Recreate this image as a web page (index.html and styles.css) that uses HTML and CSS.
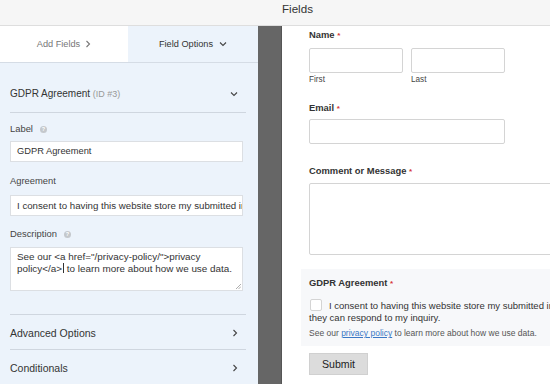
FILE: index.html
```html
<!DOCTYPE html>
<html>
<head>
<meta charset="utf-8">
<link rel="stylesheet" href="styles.css">
</head>
<body>
<div class="topbar">Fields</div>
<div class="main">
  <aside class="left">
    <div class="tabs">
      <div class="tab tab-add">Add Fields <svg class="chev" width="6" height="8" viewBox="0 0 6 8"><polyline points="1.5,1 4.5,4 1.5,7" fill="none" stroke="#777" stroke-width="1.1"/></svg></div>
      <div class="tab tab-opt">Field Options <svg class="chev" width="8" height="6" viewBox="0 0 8 6"><polyline points="1,1.5 4,4.5 7,1.5" fill="none" stroke="#444" stroke-width="1.1"/></svg></div>
    </div>
    <div class="opts">
      <div class="opt-head">
        <span class="opt-title">GDPR Agreement <span class="opt-id">(ID #3)</span></span>
        <svg width="8" height="6" viewBox="0 0 8 6"><polyline points="1,1.5 4,4.5 7,1.5" fill="none" stroke="#444" stroke-width="1.1"/></svg>
      </div>
      <div class="lbl lbl-first">Label <span class="help">?</span></div>
      <div class="inp">GDPR Agreement</div>
      <div class="lbl lbl-agree">Agreement</div>
      <div class="inp inp-agree">I consent to having this website store my submitted information so they can respond to my inquiry.</div>
      <div class="lbl lbl-desc">Description <span class="help">?</span></div>
      <div class="txa">See our &lt;a href="/privacy-policy/"&gt;privacy policy&lt;/a&gt;<span class="caret"></span> to learn more about how we use data.
        <svg class="grip" width="6" height="6" viewBox="0 0 6 6"><line x1="1" y1="6" x2="6" y2="1" stroke="#999" stroke-width="0.8"/><line x1="3.5" y1="6" x2="6" y2="3.5" stroke="#999" stroke-width="0.8"/></svg>
      </div>
      <div class="sect sect-first">Advanced Options <svg width="6" height="8" viewBox="0 0 6 8"><polyline points="1.5,1 4.5,4 1.5,7" fill="none" stroke="#444" stroke-width="1.1"/></svg></div>
      <div class="sect">Conditionals <svg width="6" height="8" viewBox="0 0 6 8"><polyline points="1.5,1 4.5,4 1.5,7" fill="none" stroke="#444" stroke-width="1.1"/></svg></div>
    </div>
  </aside>
  <div class="gutter"></div>
  <section class="right">
    <div class="form">
      <div class="field">
        <div class="flabel">Name <span class="req">*</span></div>
        <div class="name-row">
          <div class="name-col"><div class="box box-name"></div><div class="sub">First</div></div>
          <div class="name-col"><div class="box box-name"></div><div class="sub">Last</div></div>
        </div>
      </div>
      <div class="field field-email">
        <div class="flabel">Email <span class="req">*</span></div>
        <div class="box box-email"></div>
      </div>
      <div class="field field-comment">
        <div class="flabel">Comment or Message <span class="req">*</span></div>
        <div class="box box-area"></div>
      </div>
      <div class="field gdpr">
        <div class="flabel">GDPR Agreement <span class="req">*</span></div>
        <div class="consent"><span class="check"></span>I consent to having this website store my submitted information so<br>they can respond to my inquiry.</div>
        <div class="note">See our <a href="#" class="plink">privacy policy</a> to learn more about how we use data.</div>
      </div>
      <div class="field">
        <button class="submit">Submit</button>
      </div>
    </div>
  </section>
</div>
</body>
</html>
```
FILE: styles.css
```css
* { box-sizing: border-box; }
html, body { margin: 0; padding: 0; }
body {
  width: 550px;
  height: 384px;
  overflow: hidden;
  font-family: "Liberation Sans", Arial, sans-serif;
  color: #444;
  background: #fff;
}
.topbar {
  height: 26px;
  background: #f6f6f6;
  border-bottom: 1px solid #dedede;
  padding-left: 282px;
  font-size: 11.6px;
  line-height: 18px;
  color: #333;
}
.main {
  display: flex;
  height: 358px;
}
.left {
  width: 258px;
  background: #ecf3fb;
  flex: none;
}
.tabs {
  display: flex;
  height: 37px;
  border-bottom: 1px solid #d5dce5;
}
.tab {
  display: flex;
  align-items: center;
  justify-content: center;
  gap: 5px;
  font-size: 9.2px;
}
.tab-add {
  width: 128px;
  background: #fff;
  color: #777;
}
.tab-opt {
  flex: 1;
  color: #333;
  gap: 6px;
}
.opts {
  padding: 0 12px 0 10px;
}
.opt-head {
  display: flex;
  justify-content: space-between;
  align-items: center;
  padding: 24px 8px 11px 0;
  border-bottom: 1px solid #cfd6df;
  line-height: 14px;
}
.opt-title {
  font-size: 10px;
  color: #333;
}
.opt-id {
  font-size: 9px;
  color: #999;
}
.lbl {
  font-size: 9.4px;
  line-height: 12px;
  color: #444;
  display: flex;
  align-items: center;
  gap: 7px;
}
.lbl-first { margin-top: 10px; }
.lbl-agree { margin-top: 13px; }
.lbl-desc { margin-top: 12px; }
.help {
  display: inline-flex;
  align-items: center;
  justify-content: center;
  width: 7px;
  height: 7px;
  border-radius: 50%;
  background: #c4c8cc;
  color: #fff;
  font-size: 5.5px;
  font-weight: bold;
  line-height: 7px;
}
.inp {
  margin-top: 6px;
  width: 233px;
  height: 21px;
  background: #fff;
  border: 1px solid #dcdfe3;
  font-size: 9.3px;
  line-height: 19px;
  padding: 0 6px;
  white-space: nowrap;
  overflow: hidden;
  color: #333;
}
.inp-agree { margin-top: 8px; font-size: 9.7px; }
.txa {
  position: relative;
  margin-top: 7px;
  width: 233px;
  height: 44px;
  background: #fff;
  border: 1px solid #dcdfe3;
  font-size: 9.9px;
  line-height: 12px;
  padding: 3px 6px;
  color: #333;
  margin-bottom: 23px;
}
.caret {
  display: inline-block;
  width: 1px;
  height: 10px;
  margin-left: 1px;
  background: #333;
  vertical-align: -1px;
}
.grip {
  position: absolute;
  right: 1px;
  bottom: 1px;
}
.sect {
  display: flex;
  justify-content: space-between;
  align-items: center;
  border-top: 1px solid #cfd6df;
  padding: 11px 8px 9px 0;
  font-size: 10.5px;
  line-height: 14px;
  color: #333;
}
.gutter {
  width: 24px;
  flex: none;
  background: #666;
  border-right: 1px solid #555;
}
.right {
  flex: 1;
  overflow: hidden;
  padding: 3px 0 0 19px;
}
.form {
  width: 400px;
}
.field {
  padding: 0 8px;
}
.flabel {
  font-size: 9.4px;
  font-weight: bold;
  line-height: 12px;
  color: #333;
}
.req {
  color: #d63638;
  font-size: 8px;
}
.name-row {
  display: flex;
  gap: 8px;
  margin-top: 6px;
}
.box {
  background: #fff;
  border: 1px solid #d4d4d4;
  border-radius: 2px;
}
.box-name {
  width: 94px;
  height: 25px;
}
.sub {
  margin-top: 2px;
  font-size: 8.2px;
  line-height: 10px;
  color: #444;
}
.field-email { margin-top: 17px; }
.box-email {
  margin-top: 4px;
  width: 196px;
  height: 25px;
}
.field-comment { margin-top: 21px; }
.box-area {
  margin-top: 5px;
  width: 300px;
  height: 72px;
}
.gdpr {
  margin-top: 14px;
  background: #f7f8fa;
  padding: 8px 8px 7px 8px;
}
.consent {
  margin-top: 9px;
  font-size: 9.5px;
  line-height: 12px;
  color: #333;
  white-space: nowrap;
}
.check {
  display: inline-block;
  width: 12px;
  height: 12px;
  background: #fff;
  border: 1px solid #d4d4d4;
  border-radius: 2px;
  vertical-align: -2px;
  margin-right: 7px;
  margin-left: 1px;
}
.note {
  margin-top: 3px;
  font-size: 8.5px;
  line-height: 12px;
  color: #555;
}
.plink {
  color: #3b78c5;
  text-decoration: underline;
}
.submit {
  margin-top: 7px;
  width: 59px;
  height: 22px;
  background: #dcdcdc;
  border: 1px solid #d0d0d0;
  font-family: "Liberation Sans", Arial, sans-serif;
  font-size: 10.6px;
  color: #222;
  padding: 0;
}
```
